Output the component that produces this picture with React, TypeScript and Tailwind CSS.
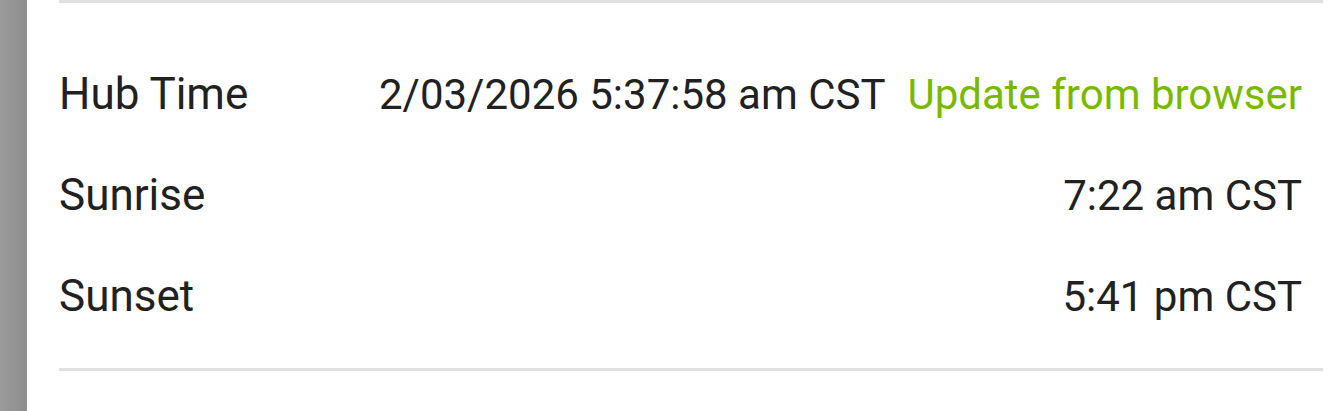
export default function App() {
  const rows = [
    { label: "Sunrise", value: "7:22 am CST" },
    { label: "Sunset", value: "5:41 pm CST" },
  ];
  return (
    <div className="flex h-[411px] w-[1344px] bg-white" style={{ fontFamily: "Roboto, 'Noto Sans', sans-serif" }}>
      <div className="h-full w-[27px] shrink-0 bg-gradient-to-r from-[#9b9b9b] to-[#8d8d8d]" />
      <div className="ml-[32px] w-[1264px]">
        <div className="h-[3px] bg-[#e0e0e0]" />
        <div className="pt-[41px] pb-[21px] pr-[21px] text-[42px] text-[#212121]">
          <div className="flex h-[101px] items-center justify-between leading-[101px]">
            <span className="text-[44px]">Hub Time</span>
            <div className="flex gap-[22px]">
              <span>2/03/2026 5:37:58 am CST</span>
              <span className="text-[#78b900]">Update from browser</span>
            </div>
          </div>
          {rows.map((r) => (
            <div key={r.label} className="flex h-[101px] items-center justify-between leading-[101px]">
              <span className="text-[44px]">{r.label}</span>
              <span>{r.value}</span>
            </div>
          ))}
        </div>
        <div className="h-[3px] bg-[#e0e0e0]" />
      </div>
    </div>
  );
}
